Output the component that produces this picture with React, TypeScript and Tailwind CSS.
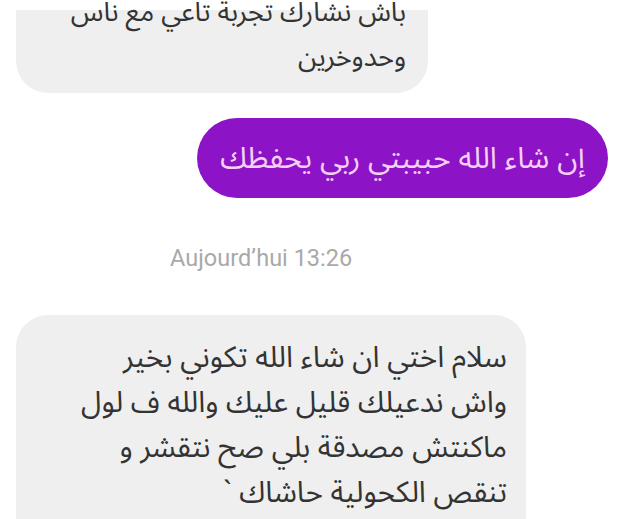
import { memo } from "react";

const arabic = {
  fontFamily: '"Noto Sans Arabic", "Noto Naskh Arabic", "DejaVu Sans", sans-serif',
};

const lastMessage = [
  "سلام اختي ان شاء الله تكوني بخير",
  "واش ندعيلك قليل عليك والله ف لول",
  "ماكنتش مصدقة بلي صح نتقشر  و",
  "تنقص الكحولية حاشاك `",
];

function App() {
  return (
    <div className="w-[624px] h-[519px] overflow-hidden bg-white flex flex-col">
      {/* previous received message, cut at the top */}
      <div className="ml-[16px] mt-[10px] w-[412px] h-[83px] shrink-0 bg-[#efefef] rounded-b-[32px] pr-[22px] flex flex-col">
        <div
          dir="rtl"
          className="-mt-[20px] text-[27px] leading-[45px] text-[#333] text-right"
          style={arabic}
        >
          <div>باش نشارك تجربة تاعي مع ناس</div>
          <div>وحدوخرين</div>
        </div>
      </div>

      {/* sent message */}
      <div className="flex justify-end pr-[16px] mt-[25px] shrink-0">
        <div
          dir="rtl"
          className="w-[411px] h-[80px] rounded-full bg-[#8c14c6] flex items-center justify-center text-[30px] text-[#f6d0f6]"
          style={arabic}
        >
          إن شاء الله حبيبتي ربي يحفظك
        </div>
      </div>

      {/* date separator */}
      <div className="mt-[45px] pl-[170px] text-[23.5px] leading-[30px] text-[#a9a9a9] font-['Roboto',sans-serif] shrink-0">
        Aujourd’hui 13:26
      </div>

      {/* received message */}
      <div className="ml-[16px] mt-[42px] w-[510px] shrink-0 bg-[#efefef] rounded-t-[32px] pt-[20px] pr-[19px] pb-[30px]">
        <div
          dir="rtl"
          className="text-[29.5px] leading-[45px] text-[#333] text-right"
          style={arabic}
        >
          {lastMessage.map((line, i) => (
            <div key={i}>{line}</div>
          ))}
        </div>
      </div>
    </div>
  );
}

export default memo(App);
